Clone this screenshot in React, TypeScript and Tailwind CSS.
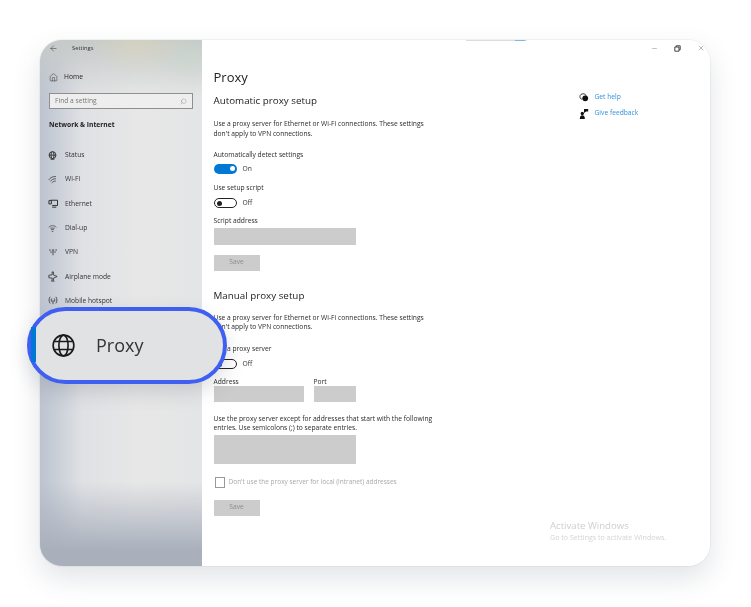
import { ArrowLeft, Home, Search, Minus, X } from "lucide-react"
import type { ReactNode } from "react"

const font = "font-['Open_Sans','Noto_Sans',sans-serif]"

const StatusIcon = () => (
  <svg width="9" height="9" viewBox="0 0 12 12" fill="none" stroke="#222" strokeWidth="1.1">
    <circle cx="6" cy="5.5" r="4.6" />
    <ellipse cx="6" cy="5.5" rx="2" ry="4.6" />
    <path d="M1.4 5.5h9.2M3.5 11h5" />
  </svg>
)
const WifiIcon = () => (
  <svg width="9" height="9" viewBox="0 0 12 12" fill="none" stroke="#333" strokeWidth="1">
    <path d="M1 6.5C3 3.5 6 2 10.500 2M3 8.500C4.500 6.500 7 5 10.500 5M5 10.500C6 9.500 8 8 10.500 8" />
  </svg>
)
const EthernetIcon = () => (
  <svg width="10" height="9" viewBox="0 0 12 11" fill="none" stroke="#222" strokeWidth="1.1">
    <path d="M3 1.500h8.500v6.500H5M5 10h5M1 2h3v4H1z" />
  </svg>
)
const DialupIcon = () => (
  <svg width="9" height="9" viewBox="0 0 12 12" fill="none" stroke="#444" strokeWidth="1">
    <path d="M1 4.500C3 1.500 9 1.500 11 4.500M3 5.500h6M4 7.500h4M5 10h2" />
  </svg>
)
const VpnIcon = () => (
  <svg width="10" height="8" viewBox="0 0 12 10" fill="none" stroke="#444" strokeWidth="1.2">
    <path d="M1 2.500h2M4.500 2.500h3M9 2.500h2M2.500 5h2M7.500 5h2M6 3v6" />
  </svg>
)
const PlaneIcon = () => (
  <svg width="10" height="11" viewBox="0 0 12 13" fill="none" stroke="#333" strokeWidth="1">
    <path d="M5 1h1.500v3.500L11 6.500l-4.500 2V11l1 1H4l1-1V8.500L1 8V5l4-.5z" />
  </svg>
)
const HotspotIcon = () => (
  <svg width="10" height="9" viewBox="0 0 12 11" fill="none" stroke="#333" strokeWidth="1">
    <path d="M2.500 1C.8 3.500.8 6.500 2.500 9M9.500 1c1.700 2.500 1.700 5.500 0 8M4.500 3c-.8 1.300-.8 2.700 0 4M7.500 3c.8 1.300.8 2.700 0 4M6 5v5" />
  </svg>
)
const BigGlobe = () => (
  <svg width="23" height="23" viewBox="0 0 24 24" fill="none" stroke="#1a1a1a" strokeWidth="1.7">
    <circle cx="12" cy="12" r="10.800" />
    <ellipse cx="12" cy="12" rx="4.800" ry="10.800" />
    <path d="M2.300 7.800h19.400M2.300 16.200h19.400" />
  </svg>
)
const HelpIcon = () => (
  <svg width="10" height="9" viewBox="0 0 12 11" fill="none">
    <path d="M1 4.500C1 2 3 1 5 1s3.500 1 3.500 2.500" stroke="#111" strokeWidth="1" />
    <path d="M1 4.500c0 2 1 3 3 3" stroke="#111" strokeWidth="1" />
    <circle cx="7.500" cy="6.500" r="3.500" fill="#111" />
  </svg>
)
const FeedbackIcon = () => (
  <svg width="10" height="11" viewBox="0 0 12 13" fill="#111">
    <path d="M6 1h5v3H8.500L6 6z" />
    <circle cx="4" cy="6.500" r="2" />
    <path d="M1 13c0-3 1-4.500 3-4.500s3 1.500 3 4.500z" />
  </svg>
)

const Toggle = ({ on, label }: { on?: boolean; label: string }) => (
  <div className="flex h-[10px] items-center gap-[6px]">
    <div
      className={
        on
          ? "flex h-[10px] w-[23px] items-center justify-end rounded-full bg-[#0078d4] pr-[2px]"
          : "flex h-[10px] w-[23px] items-center rounded-full border border-[#222] bg-white pl-[2px]"
      }
    >
      <div className={on ? "h-[5px] w-[5px] rounded-full bg-white" : "h-[5px] w-[5px] rounded-full bg-[#222]"} />
    </div>
    <span className="text-[6.7px] leading-[10px] text-[#333]">{label}</span>
  </div>
)

const SaveButton = () => (
  <div className="flex h-[16px] w-[46px] items-center justify-center bg-[#cccccc] text-[6.7px] text-[#8c8c8c]">Save</div>
)

const Label = ({ children, className = "" }: { children: ReactNode; className?: string }) => (
  <p className={`text-[6.7px] leading-[9.500px] text-[#2a2a2a] ${className}`}>{children}</p>
)

const navItems = [
  { label: "Status", icon: <StatusIcon /> },
  { label: "Wi-Fi", icon: <WifiIcon /> },
  { label: "Ethernet", icon: <EthernetIcon /> },
  { label: "Dial-up", icon: <DialupIcon /> },
  { label: "VPN", icon: <VpnIcon /> },
  { label: "Airplane mode", icon: <PlaneIcon /> },
  { label: "Mobile hotspot", icon: <HotspotIcon /> },
]

const Sidebar = () => (
  <aside className="h-full w-[162px] shrink-0 bg-[radial-gradient(ellipse_50px_34px_at_60%_0%,rgba(222,216,186,0.55),transparent),radial-gradient(ellipse_40px_30px_at_92%_3%,rgba(200,214,202,0.5),transparent),linear-gradient(180deg,#c6cac9_0%,rgba(200,204,204,0)_11%,rgba(168,176,190,0)_84%,#a9b0bc_97%),linear-gradient(90deg,#bcc4d0_0%,#c9ced7_10%,#dfe1e4_26%,#e7e7e7_60%,#e4e5e6_100%)] pl-[9px] pr-[9px]">
    {/* Title bar */}
    <div className="flex h-[16px] items-center">
      <ArrowLeft size={9} strokeWidth={1.300} className="text-[#333]" />
      <span className="ml-[14px] text-[5.800px] text-[#333]">Settings</span>
    </div>

    {/* Home */}
    <div className="mt-[15px] flex h-[12px] items-center gap-[6px]">
      <Home size={9} strokeWidth={1.200} className="text-[#222]" />
      <span className="text-[6.7px] text-[#222]">Home</span>
    </div>

    {/* Search */}
    <div className="mt-[10px] flex h-[16px] w-[144px] items-center justify-between border border-[#8f8f8f] bg-[#eeeeee] pl-[5px] pr-[5px]">
      <span className="text-[6.7px] text-[#777]">Find a setting</span>
      <Search size={7} strokeWidth={1} className="-scale-x-100 text-[#666]" />
    </div>

    <p className="mt-[10px] text-[6.7px] leading-[12px] font-bold text-[#222]">Network &amp; Internet</p>

    {/* Nav items */}
    <nav className="mt-[12px] flex flex-col">
      {navItems.map((item) => (
        <div key={item.label} className="flex h-[24.300px] items-center">
          <div className="-ml-px flex w-[17px] shrink-0 items-center">{item.icon}</div>
          <span className="text-[6.7px] text-[#333]">{item.label}</span>
        </div>
      ))}
    </nav>
  </aside>
)

const Content = () => (
  <main className="relative h-full min-w-0 flex-1 bg-white">
    {/* Sliver of a bar at the top edge */}
    <div className="absolute left-[264px] top-0 h-px w-[61px] bg-[#dcdcdc]" />
    <div className="absolute left-[313px] top-0 h-px w-[10px] bg-[#7db8ea]" />

    {/* Window controls */}
    <div className="flex h-[16px] items-center justify-end gap-[16px] pr-[5px]">
      <Minus size={7} strokeWidth={1} className="text-[#333]" />
      <svg width="7" height="7" viewBox="0 0 7 7" fill="none" stroke="#333" strokeWidth="0.900">
        <path d="M.8 2h4.200v4.200H.8zM2.200 2V.8h4v4H5" />
      </svg>
      <X size={8} strokeWidth={1} className="text-[#333]" />
    </div>

    <div className="flex pl-[11.500px]">
      <div className="w-[226px] shrink-0">
        <h1 className="mt-[11px] text-[13px] leading-[20px] text-[#222]">Proxy</h1>
        <h2 className="mt-[7px] text-[9.800px] leading-[14px] text-[#222]">Automatic proxy setup</h2>

        <Label className="mt-[11px]">
          Use a proxy server for Ethernet or Wi-Fi connections. These settings
          <br />
          don't apply to VPN connections.
        </Label>

        <Label className="mt-[12px]">Automatically detect settings</Label>
        <div className="mt-[4px]">
          <Toggle on label="On" />
        </div>

        <Label className="mt-[9px]">Use setup script</Label>
        <div className="mt-[6px]">
          <Toggle label="Off" />
        </div>

        <Label className="mt-[8px]">Script address</Label>
        <div className="mt-[2px] h-[17px] w-[142px] bg-[#cccccc]" />
        <div className="mt-[10px]">
          <SaveButton />
        </div>

        <h2 className="mt-[18px] text-[9.800px] leading-[14px] text-[#222]">Manual proxy setup</h2>

        <Label className="mt-[10px]">
          Use a proxy server for Ethernet or Wi-Fi connections. These settings
          <br />
          don't apply to VPN connections.
        </Label>

        <Label className="mt-[12px]">Use a proxy server</Label>
        <div className="mt-[6px]">
          <Toggle label="Off" />
        </div>

        <div className="mt-[8px] flex gap-[10px]">
          <div>
            <Label>Address</Label>
            <div className="-mt-px h-[16px] w-[90px] bg-[#cccccc]" />
          </div>
          <div>
            <Label>Port</Label>
            <div className="-mt-px h-[16px] w-[42px] bg-[#cccccc]" />
          </div>
        </div>

        <Label className="mt-[12px]">
          Use the proxy server except for addresses that start with the following
          <br />
          entries. Use semicolons (;) to separate entries.
        </Label>
        <div className="mt-[2px] h-[29px] w-[142px] bg-[#cccccc]" />

        <div className="mt-[13px] flex items-center gap-[4px] pl-[1px]">
          <div className="h-[11px] w-[10px] border border-[#999] bg-white" />
          <span className="text-[6.5px] text-[#aaaaaa]">Don't use the proxy server for local (intranet) addresses</span>
        </div>

        <div className="mt-[12px]">
          <SaveButton />
        </div>
      </div>

      {/* Help links */}
      <div className="ml-[139px] flex flex-col gap-[6px] pt-[36px]">
        <div className="flex h-[10px] items-center gap-[6px]">
          <HelpIcon />
          <span className="text-[6.7px] text-[#2f8fe0]">Get help</span>
        </div>
        <div className="flex h-[10px] items-center gap-[6px]">
          <FeedbackIcon />
          <span className="text-[6.7px] text-[#2f8fe0]">Give feedback</span>
        </div>
      </div>
    </div>

    {/* Activation watermark */}
    <div className="absolute bottom-[24px] left-[348px]">
      <p className="text-[9.600px] leading-[12px] text-[#cfcfcf]">Activate Windows</p>
      <p className="text-[7.100px] leading-[10px] text-[#d4d4d4]">Go to Settings to activate Windows.</p>
    </div>
  </main>
)

const ProxyCallout = () => (
  <div className="absolute left-[-13px] top-[267px] flex h-[77px] w-[200px] items-center rounded-full border-4 border-[#3f5ff2] bg-[#e1e2e4] shadow-[0_8px_20px_rgba(60,70,90,0.18)]">
    <div className="absolute left-0 top-[16px] h-[35px] w-[5px] bg-[#0078d4]" />
    <div className="ml-[21px]">
      <BigGlobe />
    </div>
    <span className="ml-[21px] text-[18px] text-[#333]">Proxy</span>
  </div>
)

const App = () => (
  <div className={`h-[607px] w-[751px] overflow-hidden bg-white pl-[40px] pt-[40px] ${font}`}>
    <div className="relative h-[526px] w-[670px] rounded-[22px] shadow-[0_0_0_1px_rgba(0,0,0,0.04),0_12px_28px_rgba(70,80,100,0.16)] blur-[0.3px]">
      <div className="flex h-full overflow-hidden rounded-[22px]">
        <Sidebar />
        <Content />
      </div>
      <ProxyCallout />
    </div>
  </div>
)

export default App
